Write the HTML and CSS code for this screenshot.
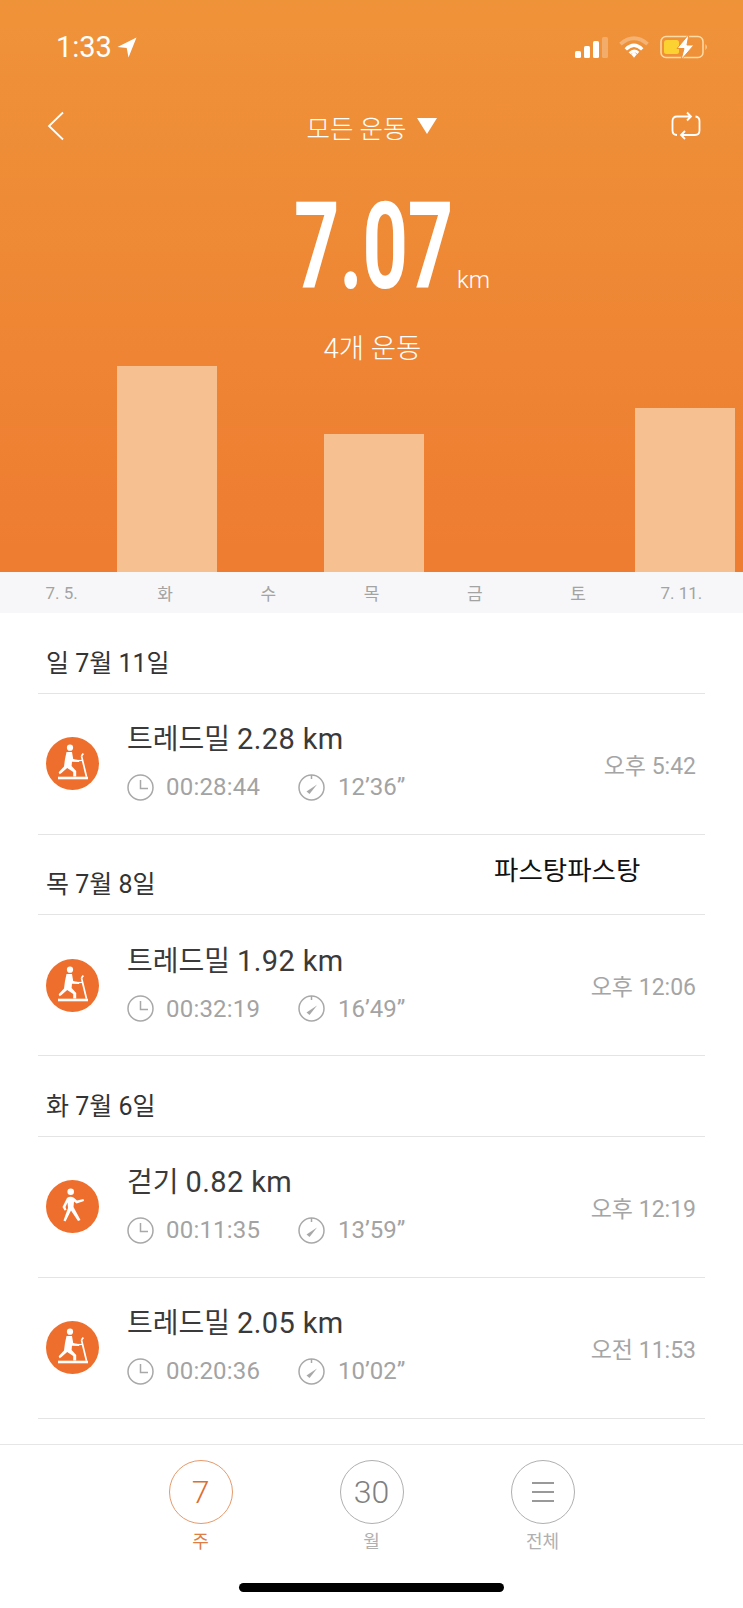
FILE: index.html
```html
<!DOCTYPE html>
<html lang="ko">
<head>
    <meta charset="UTF-8">
    <meta name="viewport" content="width=device-width, initial-scale=1.0">
    <title>모든 운동</title>
    <link rel="stylesheet" href="styles.css">
</head>
<body>
    <svg class="defs" width="0" height="0">
        <symbol id="clock" viewBox="0 0 27 27">
            <circle cx="13.500" cy="13.500" r="12.500" fill="none" stroke="#a8a8a8" stroke-width="1.500"/>
            <path d="M13.500 6v8.500h7.500" fill="none" stroke="#a8a8a8" stroke-width="1.500"/>
        </symbol>
        <symbol id="pace" viewBox="0 0 27 27">
            <circle cx="13.500" cy="13.500" r="12.500" fill="none" stroke="#a8a8a8" stroke-width="1.500"/>
            <path d="M13.500 1v4" fill="none" stroke="#a8a8a8" stroke-width="1.500"/>
            <path d="M8.500 17.500l10.500-7-7.500 9.500z" fill="#a8a8a8"/>
        </symbol>
        <symbol id="treadmill" viewBox="0 0 53 53">
            <circle cx="26.500" cy="26.500" r="26.500" fill="#ee6f2d"/>
            <circle cx="24" cy="10.700" r="3.100" fill="#fff"/>
            <path d="M20.500 15h5.500l1.200 7 6 1.300V25l-7.200-.2-.4 4.200 4.600 5v5.500h-3v-4.500l-6-4-6 5.300-1.700 1-.8-2 5.300-5.800 1-7.500z" fill="#fff"/>
            <path d="M12 39.700h30v2.600H12z" fill="#fff"/>
            <path d="M35.500 19l5 20.700M35.500 19l1.800-2.500" fill="none" stroke="#fff" stroke-width="1.700"/>
            <path d="M30 23.500h6.500" fill="none" stroke="#fff" stroke-width="1.200"/>
        </symbol>
        <symbol id="walker" viewBox="0 0 53 53">
            <circle cx="26.500" cy="26.500" r="26.500" fill="#ee6f2d"/>
            <circle cx="24.700" cy="11.700" r="3.300" fill="#fff"/>
            <path d="M21 18q3-2 6.500-.5l3.500 3 6.500-1.500.5 2-7.500 2.500-2.500-2-.5 5.500 7 13-2.500 1-7-10.500-5.500 11-2-1 4.500-12.500-.5-5.500-2 4.500 1 3-2 .5-2-3.500z" fill="#fff"/>
        </symbol>
    </svg>

    <div class="phone">
        <header class="hero">
            <div class="status">
                <div class="status-time">
                    <span>1:33</span>
                    <svg width="20" height="21" viewBox="0 0 20 21"><path d="M19.500.5L11.500 20.500l-1.800-9.500L.5 10z" fill="#fff"/></svg>
                </div>
                <div class="status-icons">
                    <svg width="33" height="21" viewBox="0 0 33 21">
                        <rect x="0" y="14" width="6" height="7" rx="1.500" fill="#fff"/>
                        <rect x="9" y="9" width="6" height="12" rx="1.500" fill="#fff"/>
                        <rect x="18" y="4" width="6" height="17" rx="1.500" fill="#fff"/>
                        <rect x="27" y="0" width="6" height="21" rx="1.500" fill="#fff" opacity=".25"/>
                    </svg>
                    <svg width="30" height="22" viewBox="0 0 31 22">
                        <path d="M1.500 8Q15.500-4 29.500 8" fill="none" stroke="#fff" stroke-width="4" opacity=".3"/>
                        <path d="M7 13.500Q15.500 5 24 13.500" fill="none" stroke="#fff" stroke-width="3.500"/>
                        <path d="M11 17.500Q15.500 13 20 17" fill="none" stroke="#fff" stroke-width="3"/>
                        <path d="M12.500 18.500l3-2.500 3 2.500-3 3.500z" fill="#fff"/>
                    </svg>
                    <svg width="48" height="26" viewBox="0 0 48 26">
                        <rect x="1" y="2.500" width="42" height="21" rx="5" fill="none" stroke="#ffdca6" stroke-width="1.500"/>
                        <rect x="4" y="6" width="15" height="14" rx="2.500" fill="#fcd232"/>
                        <path d="M45.500 10q2.500 3 0 6z" fill="#ffdca6"/>
                        <path d="M29 0L17 14.500h7L21 26l13-15h-7z" fill="#fff" stroke="#ef8f38" stroke-width="1"/>
                    </svg>
                </div>
            </div>

            <nav class="topbar">
                <svg class="back" width="18" height="30" viewBox="0 0 18 30"><path d="M16 1.500L2 15l14 13.500" fill="none" stroke="#fff" stroke-width="1.800"/></svg>
                <div class="topbar-title">모든 운동<span class="caret"></span></div>
                <svg class="repeat" width="32" height="30" viewBox="0 0 32 30">
                    <path d="M7 5.500h14M17 1.500l4 4-4 4M9 5.500H7Q2.500 5.500 2.500 10v9.500q0 4.500 4.500 4.500M25.500 5.500q4 .5 4 4.500v9.500q0 4.500-4.500 4.500H11M15 20l-4 4 4 4" fill="none" stroke="#fff" stroke-width="1.800"/>
                </svg>
            </nav>

            <div class="total">
                <span class="total-box"><span class="total-value">7.07</span></span>
                <span class="total-unit">km</span>
            </div>
            <div class="count">4개 운동</div>

            <div class="bars">
                <div></div>
                <div class="bar" style="height: 206px"></div>
                <div></div>
                <div class="bar" style="height: 138px"></div>
                <div></div>
                <div></div>
                <div class="bar" style="height: 164px"></div>
            </div>
        </header>

        <div class="axis">
            <span>7. 5.</span><span>화</span><span>수</span><span>목</span><span>금</span><span>토</span><span>7. 11.</span>
        </div>

        <main class="list">
            <h2 class="day">일 7월 11일</h2>
            <div class="row">
                <svg class="row-icon" width="53" height="53"><use href="#treadmill"/></svg>
                <div class="row-body">
                    <div class="row-title">트레드밀 <span class="row-dist">2.28 km</span></div>
                    <div class="row-meta">
                        <svg width="27" height="27"><use href="#clock"/></svg>
                        <span class="duration">00:28:44</span>
                        <svg width="27" height="27"><use href="#pace"/></svg>
                        <span>12’36”</span>
                    </div>
                </div>
                <div class="row-time">오후 5:42</div>
            </div>

            <h2 class="day">목 7월 8일</h2>
            <div class="row">
                <svg class="row-icon" width="53" height="53"><use href="#treadmill"/></svg>
                <div class="row-body">
                    <div class="row-title">트레드밀 <span class="row-dist">1.92 km</span></div>
                    <div class="row-meta">
                        <svg width="27" height="27"><use href="#clock"/></svg>
                        <span class="duration">00:32:19</span>
                        <svg width="27" height="27"><use href="#pace"/></svg>
                        <span>16’49”</span>
                    </div>
                </div>
                <div class="row-time">오후 12:06</div>
            </div>

            <h2 class="day">화 7월 6일</h2>
            <div class="row">
                <svg class="row-icon" width="53" height="53"><use href="#walker"/></svg>
                <div class="row-body">
                    <div class="row-title">걷기 <span class="row-dist">0.82 km</span></div>
                    <div class="row-meta">
                        <svg width="27" height="27"><use href="#clock"/></svg>
                        <span class="duration">00:11:35</span>
                        <svg width="27" height="27"><use href="#pace"/></svg>
                        <span>13’59”</span>
                    </div>
                </div>
                <div class="row-time">오후 12:19</div>
            </div>
            <div class="row">
                <svg class="row-icon" width="53" height="53"><use href="#treadmill"/></svg>
                <div class="row-body">
                    <div class="row-title">트레드밀 <span class="row-dist">2.05 km</span></div>
                    <div class="row-meta">
                        <svg width="27" height="27"><use href="#clock"/></svg>
                        <span class="duration">00:20:36</span>
                        <svg width="27" height="27"><use href="#pace"/></svg>
                        <span>10’02”</span>
                    </div>
                </div>
                <div class="row-time">오전 11:53</div>
            </div>
        </main>

        <div class="caption">파스탕파스탕</div>

        <footer class="tabs">
            <div class="tab tab-active">
                <div class="tab-circle">7</div>
                <span>주</span>
            </div>
            <div class="tab">
                <div class="tab-circle">30</div>
                <span>월</span>
            </div>
            <div class="tab">
                <div class="tab-circle"><div class="tab-lines"></div></div>
                <span>전체</span>
            </div>
        </footer>
        <div class="home-bar"></div>
    </div>
</body>
</html>
```

FILE: styles.css
```css
* {
    box-sizing: border-box;
}
body {
    margin: 0;
    background-color: #fff;
    font-family: Roboto, "Noto Sans CJK KR", sans-serif;
}
.defs {
    position: absolute;
}
.phone {
    position: relative;
    width: 743px;
    height: 1608px;
    overflow: hidden;
}

/* orange top part */
.hero {
    display: flex;
    flex-direction: column;
    height: 572px;
    color: #fff;
    background: linear-gradient(#ef9339, #ee7c31);
}
.status {
    display: flex;
    justify-content: space-between;
    align-items: center;
    height: 46px;
    margin-top: 24px;
    padding: 0 35px 0 56px;
}
.status-time {
    display: flex;
    align-items: center;
    gap: 5px;
    font-size: 29px;
}
.status-icons {
    display: flex;
    align-items: center;
    gap: 11px;
}
.topbar {
    display: flex;
    justify-content: space-between;
    align-items: center;
    height: 40px;
    margin-top: 36px;
    padding: 0 41px 0 47px;
}
.topbar-title {
    display: flex;
    align-items: center;
    gap: 10px;
    padding-left: 8px;
    font-size: 25.5px;
    font-weight: 300;
}
.caret {
    width: 0;
    height: 0;
    border-left: 10px solid transparent;
    border-right: 10px solid transparent;
    border-top: 16px solid #fff;
}
.total {
    display: flex;
    align-items: baseline;
    height: 120px;
    margin-top: 41px;
    padding-left: 294px;
}
.total-box {
    display: block;
    width: 157px;
    line-height: 120px;
}
.total-value {
    display: inline-block;
    font-size: 120px;
    font-weight: 700;
    white-space: nowrap;
    transform: scaleX(0.66);
    transform-origin: left;
}
.total-unit {
    margin-left: 6px;
    font-size: 24px;
    font-weight: 300;
}
.count {
    margin-top: 19px;
    padding-left: 2px;
    text-align: center;
    font-size: 27.5px;
    font-weight: 300;
}
.bars {
    display: grid;
    grid-template-columns: repeat(7, 100px);
    column-gap: 3.5px;
    align-items: end;
    margin-top: auto;
    padding-left: 13.5px;
}
.bar {
    background-color: #f6c090;
}

.axis {
    display: grid;
    grid-template-columns: repeat(7, 103.3px);
    align-items: center;
    height: 41px;
    padding-left: 10px;
    text-align: center;
    font-size: 17px;
    color: #a3a3a3;
    background-color: #f7f7f9;
}

/* list of sessions */
.list {
    padding: 0 38px;
}
.day {
    display: flex;
    align-items: center;
    height: 80.5px;
    margin: 0;
    padding: 16px 0 0 8px;
    border-bottom: 1px solid #e4e4e4;
    font-size: 25px;
    font-weight: 400;
    color: #333;
}
.row {
    display: flex;
    align-items: center;
    height: 141px;
    padding: 0 9px 0 8px;
    border-bottom: 1px solid #e4e4e4;
}
.row-body {
    flex: 1;
    margin-left: 28px;
    padding-bottom: 6px;
}
.row-title {
    height: 40px;
    line-height: 40px;
    font-size: 28px;
    color: #3a3a3a;
}
.row-dist {
    font-size: 29px;
    letter-spacing: 0.4px;
}
.row-meta {
    display: flex;
    align-items: center;
    height: 30px;
    margin-top: 13px;
    font-size: 24px;
    color: #a3a3a3;
}
.duration {
    width: 132px;
    margin-left: 12px;
    letter-spacing: 0.2px;
}
.row-meta svg + span:last-child {
    margin-left: 13px;
}
.row-time {
    font-size: 23px;
    color: #a5a5a5;
}

.caption {
    position: absolute;
    left: 494px;
    top: 852px;
    font-size: 26.5px;
    line-height: 38px;
    color: #111;
}

/* bottom tabs */
.tabs {
    display: flex;
    justify-content: center;
    gap: 107px;
    height: 140px;
    margin-top: 25.5px;
    padding-top: 15px;
    border-top: 1px solid #e6e6e6;
}
.tab {
    display: flex;
    flex-direction: column;
    align-items: center;
    width: 64px;
    font-size: 18px;
    color: #b0b0b0;
}
.tab-circle {
    display: flex;
    justify-content: center;
    align-items: center;
    width: 64px;
    height: 64px;
    margin-bottom: 3px;
    border: 1px solid #b0b0b0;
    border-radius: 50%;
    font-size: 32px;
    font-weight: 300;
    color: #808080;
}
.tab-active {
    color: #de7d45;
}
.tab-active .tab-circle {
    border-color: #e59a6c;
    color: #dc6e32;
}
.tab-lines {
    width: 22px;
    height: 20px;
    border-top: 2px solid #999;
    border-bottom: 2px solid #999;
    background: linear-gradient(#999, #999) center / 100% 2px no-repeat;
}
.home-bar {
    position: absolute;
    left: 239px;
    top: 1583px;
    width: 265px;
    height: 9px;
    border-radius: 5px;
    background-color: #000;
}
```
